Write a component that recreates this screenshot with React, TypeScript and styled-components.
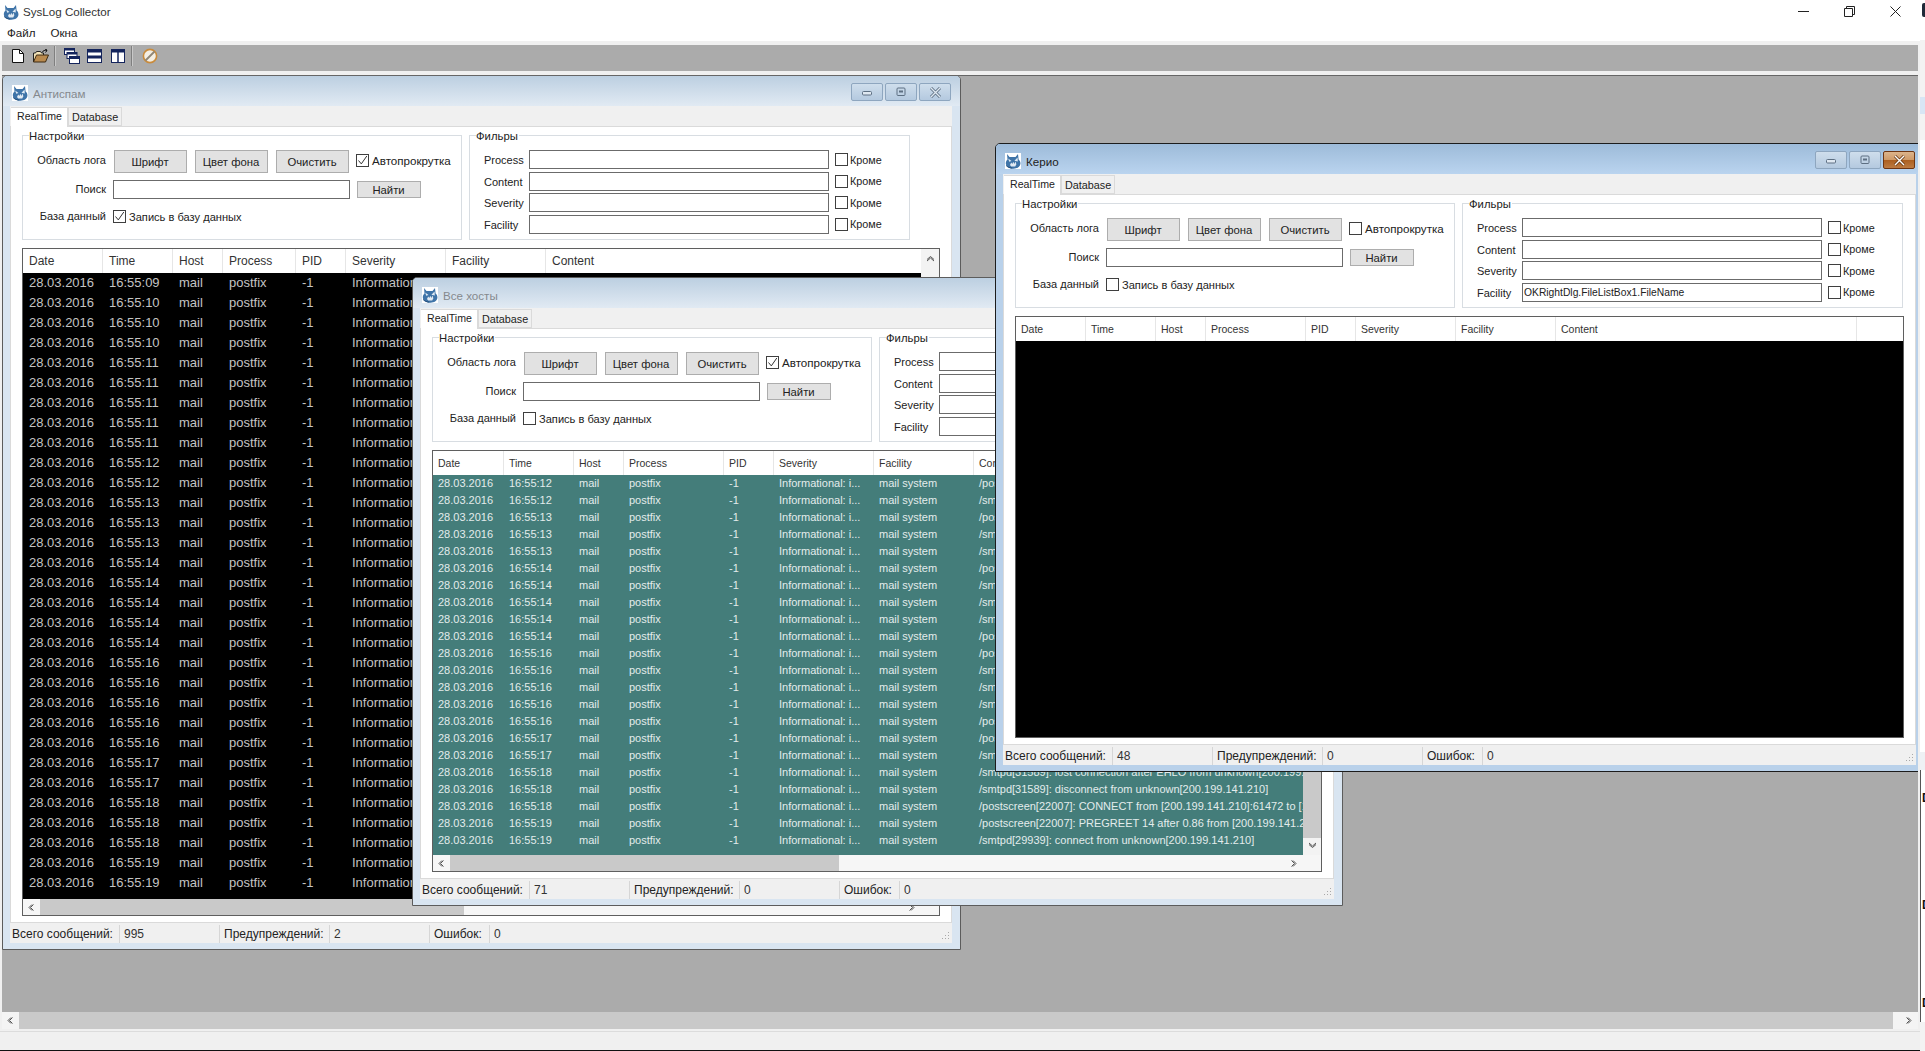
import React from "react";
import styled, { createGlobalStyle } from "styled-components";

const GlobalStyle = createGlobalStyle`
    html, body {
        margin: 0;
        padding: 0;
        background: #fff;
        overflow: hidden;
    }
    * {
        box-sizing: border-box;
    }
    body {
        font-family: "Liberation Sans", Arial, sans-serif;
        font-size: 12px;
        color: #222;
    }
`;

const Screen = styled.div`
    display: flex;
    width: 1925px;
    height: 1051px;
    overflow: hidden;
    background: #fff;
`;

const MainWindow = styled.div`
    display: flex;
    flex-direction: column;
    width: 1920px;
    height: 1051px;
    background: #f0f0f0;
    border-bottom: 1px solid #111;
`;

const AppTitleBar = styled.div`
    display: flex;
    align-items: center;
    height: 22px;
    padding: 1px 2px 0 3px;
    background: #fff;
`;

const AppTitle = styled.span`
    flex: 1;
    margin-left: 4px;
    font-size: 11.6px;
    color: #333;
`;

const CaptionButton = styled.div`
    display: flex;
    align-items: center;
    justify-content: center;
    width: 46px;
    height: 20px;
`;

const MenuBar = styled.div`
    display: flex;
    height: 19px;
    padding: 2px 0 0 7px;
    gap: 15px;
    background: #fff;
    align-items: center;
    font-size: 11.6px;
`;

const ToolbarBand = styled.div`
    height: 34px;
    padding: 4px 2px 3px 2px;
    background: #f0f0f0;
`;

const Toolbar = styled.div`
    display: flex;
    align-items: center;
    width: 1916px;
    height: 26px;
    padding: 0 0 4px 10px;
    background: #ababab;
`;

const ToolIcon = styled.svg<{ $gap?: number }>`
    display: block;
    flex: none;
    margin-right: ${(p) => p.$gap ?? 0}px;
`;

const ToolSep = styled.div<{ $gap: number }>`
    width: 2px;
    height: 20px;
    background: #7f7f7f;
    border-right: 1px solid #c8c8c8;
    margin-right: ${(p) => p.$gap}px;
    flex: none;
`;

const Desktop = styled.div`
    position: relative;
    flex: none;
    width: 1916px;
    height: 937px;
    margin-left: 2px;
    background: #ababab;
    border-top: 1px solid #666;
    overflow: hidden;
`;

const DesktopScroll = styled.div`
    display: flex;
    align-items: center;
    width: 1916px;
    height: 17px;
    margin-left: 2px;
    background: #f4f4f4;
    flex: none;
`;

const BottomStatus = styled.div`
    flex: 1;
    margin-top: 2px;
    border-top: 1px solid #dcdcdc;
    background: #f0f0f0;
`;

const ScrollBtn = styled.div<{ $w: number }>`
    display: flex;
    align-items: center;
    justify-content: center;
    flex: none;
    width: ${(p) => p.$w}px;
    height: 100%;
`;

const HThumb = styled.div<{ $w: number }>`
    flex: none;
    width: ${(p) => p.$w}px;
    height: 100%;
    background: #c9c9c9;
`;

const Spacer = styled.div`
    flex: 1;
`;

/* ---- mdi child ---- */

const Win = styled.div<{ $x: number; $y: number; $w: number; $h: number; $active?: boolean }>`
    position: absolute;
    left: ${(p) => p.$x}px;
    top: ${(p) => p.$y}px;
    width: ${(p) => p.$w}px;
    height: ${(p) => p.$h}px;
    display: flex;
    flex-direction: column;
    background: ${(p) => (p.$active ? "#b9d1ea" : "#d9e5f1")};
    border: 1px solid ${(p) => (p.$active ? "#1c1c1c" : "#5c5c5c")};
    border-radius: 5px 5px 0 0;
    overflow: hidden;
`;

const WinTitle = styled.div<{ $active?: boolean }>`
    display: flex;
    align-items: center;
    flex: none;
    height: 30px;
    padding: 3px 9px 0 9px;
    color: ${(p) => (p.$active ? "#222" : "#85898d")};
    background: linear-gradient(
        180deg,
        ${(p) => (p.$active ? "#9dbbd9" : "#bccfe1")} 0%,
        ${(p) => (p.$active ? "#bad4ef" : "#e1eaf3")} 100%
    );
`;

const WinTitleText = styled.span`
    flex: 1;
    margin: 2px 0 0 5px;
    font-size: 11.6px;
`;

const WinButtons = styled.div`
    display: flex;
    gap: 2px;
    margin-top: -1px;
`;

const WinButton = styled.div<{ $close?: boolean }>`
    display: flex;
    align-items: center;
    justify-content: center;
    width: 32px;
    height: 18px;
    border-radius: 2px;
    border: 1px solid ${(p) => (p.$close ? "#6e3512" : "#8ea6bf")};
    background: ${(p) =>
        p.$close
            ? "linear-gradient(180deg,#dcb48c 0%,#cf9a68 48%,#ac5f20 52%,#bd7b42 100%)"
            : "linear-gradient(180deg,#cfdeec 0%,#b4c9df 100%)"};
`;

const Client = styled.div`
    flex: 1;
    display: flex;
    flex-direction: column;
    min-height: 0;
    margin: 0 8px 6px 7px;
    background: #f0f0f0;
`;

const TabStrip = styled.div`
    display: flex;
    align-items: flex-end;
    flex: none;
    height: 20px;
    padding-left: 1px;
`;

const Tab = styled.div<{ $active?: boolean }>`
    display: flex;
    align-items: ${(p) => (p.$active ? "flex-start" : "center")};
    height: ${(p) => (p.$active ? 20 : 19)}px;
    margin-bottom: ${(p) => (p.$active ? -1 : 0)}px;
    width: ${(p) => (p.$active ? 57 : 54)}px;
    padding: ${(p) => (p.$active ? "2px 0 0 6px" : "1px 0 0 3px")};
    background: ${(p) => (p.$active ? "#fff" : "#f0f0f0")};
    border: 1px solid #dadada;
    border-bottom: ${(p) => (p.$active ? "none" : "1px solid #dadada")};
    border-left: ${(p) => (p.$active ? "none" : "1px solid #dadada")};
    font-size: ${(p) => (p.$active ? 10.6 : 10.8)}px;
    white-space: nowrap;
    position: relative;
    z-index: 1;
`;

const TabPanel = styled.div`
    flex: 1;
    display: flex;
    flex-direction: column;
    min-height: 0;
    padding: 8px 11px 6px 11px;
    background: #fff;
    border: 1px solid #dadada;
`;

const GroupRow = styled.div`
    display: flex;
    flex: none;
    gap: 7px;
`;

const Group = styled.div<{ $w: number }>`
    position: relative;
    flex: none;
    width: ${(p) => p.$w}px;
    height: 105px;
    border: 1px solid #d8dde2;
`;

const Legend = styled.span`
    position: absolute;
    left: 6px;
    top: -7px;
    padding-right: 1px;
    background: #fff;
    font-size: 11.3px;
    line-height: 14px;
`;

const SettingsGrid = styled.div`
    display: grid;
    grid-template-columns: 83px 1fr;
    grid-template-rows: 23px 32px 23px;
    column-gap: 7px;
    align-items: center;
    padding-top: 14px;
`;

const FieldLabel = styled.label<{ $pb: number }>`
    text-align: right;
    font-size: 11px;
    padding-bottom: ${(p) => p.$pb}px;
`;

const FlexRow = styled.div`
    display: flex;
    align-items: center;
`;

const CheckLine = styled.div<{ $mb?: number; $ml?: number }>`
    display: flex;
    align-items: center;
    margin-bottom: ${(p) => p.$mb ?? 0}px;
    margin-left: ${(p) => p.$ml ?? 0}px;
`;

const ActionButton = styled.div<{ $w: number; $h: number; $ml: number }>`
    display: flex;
    align-items: center;
    justify-content: center;
    flex: none;
    width: ${(p) => p.$w}px;
    height: ${(p) => p.$h}px;
    margin-left: ${(p) => p.$ml}px;
    padding: 1px 1px 0 0;
    background: #e2e2e2;
    border: 1px solid #adadad;
    font-size: 11.3px;
`;

const Box = styled.span<{ $mr?: number }>`
    display: flex;
    align-items: center;
    justify-content: center;
    flex: none;
    width: 13px;
    height: 13px;
    margin-right: ${(p) => p.$mr ?? 3}px;
    background: #fff;
    border: 1px solid #3f3f3f;
`;

const BoxText = styled.span<{ $size: number }>`
    font-size: ${(p) => p.$size}px;
    white-space: nowrap;
`;

const TextField = styled.input<{ $w: number }>`
    flex: none;
    width: ${(p) => p.$w}px;
    height: 19px;
    padding: 0 1px;
    border: 1px solid #6b6b6b;
    border-radius: 0;
    outline: none;
    background: #fff;
    color: #222;
    font-family: "Liberation Sans", Arial, sans-serif;
    font-size: 10.3px;
`;

const FilterGrid = styled.div`
    display: grid;
    grid-template-columns: 45px 300px 1fr;
    grid-auto-rows: 21.67px;
    align-items: start;
    padding: 14px 0 0 14px;
`;

const FilterLabel = styled.span`
    font-size: 11px;
    line-height: 20px;
`;

const FilterCheck = styled.div`
    display: flex;
    align-items: center;
    padding: 3px 0 0 6px;
`;

/* ---- log table ---- */

const LogFrame = styled.div<{ $scroll: boolean }>`
    flex: 1;
    min-height: 0;
    margin-top: 8px;
    display: grid;
    grid-template-columns: ${(p) => (p.$scroll ? "minmax(0, 1fr) 18px" : "minmax(0, 1fr)")};
    grid-template-rows: minmax(0, 1fr) ${(p) => (p.$scroll ? "16px" : "")};
    border: 1px solid #5f5f5f;
    background: #fff;
`;

const LogMain = styled.div`
    display: flex;
    flex-direction: column;
    min-width: 0;
    min-height: 0;
`;

const HeaderRow = styled.div<{ $cols: string; $size: number; $pad: number }>`
    display: grid;
    grid-template-columns: ${(p) => p.$cols};
    flex: none;
    height: 24px;
    background: #fff;
    font-size: ${(p) => p.$size}px;
    & > * {
        padding-left: ${(p) => p.$pad}px;
    }
`;

const HeaderCell = styled.div`
    line-height: 25px;
    color: #333;
    border-right: 1px solid #e6e6e6;
    white-space: nowrap;
    overflow: hidden;
    &:last-child {
        border-right: none;
    }
`;

const LogBody = styled.div<{ $bg: string; $color: string; $size: number; $rowH: number }>`
    flex: 1;
    min-height: 0;
    overflow: hidden;
    background: ${(p) => p.$bg};
    color: ${(p) => p.$color};
    font-size: ${(p) => p.$size}px;
    line-height: ${(p) => p.$rowH}px;
`;

const LogRow = styled.div<{ $cols: string; $rowH: number; $pad: number }>`
    display: grid;
    grid-template-columns: ${(p) => p.$cols};
    height: ${(p) => p.$rowH}px;
    & > * {
        padding-left: ${(p) => p.$pad}px;
    }
`;

const LogCell = styled.div`
    white-space: nowrap;
    overflow: hidden;
`;

const VScroll = styled.div`
    display: flex;
    flex-direction: column;
    background: #f3f3f3;
`;

const VThumb = styled.div`
    flex: 1;
    margin-top: 110px;
    background: #c9c9c9;
`;

const VBtn = styled.div<{ $h: number }>`
    display: flex;
    align-items: center;
    justify-content: center;
    flex: none;
    height: ${(p) => p.$h}px;
`;

const HScroll = styled.div`
    display: flex;
    align-items: center;
    background: #f6f6f6;
`;

const Corner = styled.div`
    background: #f6f6f6;
`;

const WinStatus = styled.div`
    display: flex;
    flex: none;
    height: 18px;
    margin-top: 2px;
    background: #f0f0f0;
    font-size: 12px;
    line-height: 18px;
`;

const StatusCell = styled.div<{ $w: number }>`
    flex: none;
    width: ${(p) => p.$w}px;
    padding-left: 4px;
    border-right: 1px solid #d6d6d6;
    white-space: nowrap;
    &:first-child {
        padding-left: 2px;
    }
`;

const StatusValue = styled.div<{ $w: number }>`
    flex: none;
    width: ${(p) => p.$w}px;
    padding-left: 4px;
    color: #333;
    border-right: 1px solid #d6d6d6;
    &:nth-last-child(2) {
        border-right: none;
    }
`;

const Grip = styled.svg`
    display: block;
    margin: 6px 2px 0 auto;
    flex: none;
`;

/* ---- sliver of the other window on the right edge ---- */

const OtherWindow = styled.div`
    display: flex;
    flex-direction: column;
    flex: none;
    width: 5px;
    height: 1051px;
    overflow: hidden;
    background: #fff;
`;

const SliverIcon = styled.div`
    flex: none;
    height: 14px;
    margin: 3px 0 23px 2px;
    background: #1f2a38;
    border-radius: 2px 0 0 2px;
`;

const SliverBand = styled.div<{ $h: number; $bg: string }>`
    flex: none;
    height: ${(p) => p.$h}px;
    background: ${(p) => p.$bg};
`;

const SliverGap = styled.div`
    flex: 1;
`;

const SliverList = styled.div`
    flex: none;
    height: 252px;
    display: flex;
    flex-direction: column;
    border-left: 1px solid #555;
    padding: 0 0 0 1px;
    font-size: 12px;
    line-height: 14px;
    font-weight: 700;
    color: #111;
`;

const SliverLetter = styled.span<{ $mt: number }>`
    margin-top: ${(p) => p.$mt}px;
`;

/* ---- drawings ---- */

const AppIconSvg = styled.svg`
    display: block;
    flex: none;
`;

const AppIcon = ({ plate = false }: { plate?: boolean }) => (
    <AppIconSvg width={16} height={16} viewBox="0 0 16 16">
        {plate && <rect width="16" height="16" fill="#fff" />}
        <path d="M2 1l2.5 3h6L13 1l.6 5.5c1.6 1.4 2 3 1.8 4.6-.5 3-3.2 4.6-6.9 4.6S1.6 14.3.9 11c-.3-1.7.3-3.5 1.6-4.6z" fill="#3f74a8" />
        <path d="M3.2 5.4L6.5 8 4.2 8.8z M12.6 4.6L9.4 7.8l3.4.6z" fill="#dfeaf4" />
        <path d="M5 12l1.2-2.6 1.1 1.6 1-2.2 1 2.3 1.2-2.6.9 2.8-1.2 2.2H6.2z" fill="#fff" opacity=".85" />
        <path d="M1.2 12.6c2 1.8 3.6 2.4 6 2.4" stroke="#1f4a78" fill="none" />
    </AppIconSvg>
);

const Chevron = ({ dir, color = "#555" }: { dir: "l" | "r" | "u" | "d"; color?: string }) => {
    const paths = {
        l: "M5 1.5L2 4.5l3 3M6.5 1.5l-3 3 3 3",
        r: "M3 1.5l3 3-3 3M1.5 1.5l3 3-3 3",
        u: "M1 5.5l3.5-3 3.5 3M1 7l3.5-3L8 7",
        d: "M1 2.5l3.5 3 3.5-3M1 1l3.5 3L8 1",
    };
    return (
        <svg width="9" height="9" viewBox="0 0 9 9">
            <path d={paths[dir]} fill="none" stroke={color} strokeWidth="1" />
        </svg>
    );
};

const Tick = () => (
    <svg width="11" height="11" viewBox="0 0 11 11">
        <path d="M1.5 5.5l2.8 3.4L9.8 1" fill="none" stroke="#333" strokeWidth="1" />
    </svg>
);

const MinGlyph = () => (
    <svg width="12" height="8" viewBox="0 0 12 8">
        <rect x="1.5" y="3.5" width="9" height="3.5" rx="1" fill="#dfe8f1" stroke="#5d6f82" />
    </svg>
);

const MaxGlyph = () => (
    <svg width="12" height="10" viewBox="0 0 12 10">
        <rect x="2" y="1" width="8" height="7.5" rx="1" fill="none" stroke="#5d6f82" />
        <rect x="4" y="3.5" width="4" height="2" fill="#5d6f82" />
    </svg>
);

const CloseGlyph = ({ active }: { active?: boolean }) => (
    <svg width="13" height="11" viewBox="0 0 13 11">
        <path d="M2 1l9 9M11 1l-9 9" stroke={active ? "#6b3a14" : "#5d6f82"} strokeWidth="3" />
        <path d="M2 1l9 9M11 1l-9 9" stroke={active ? "#fff" : "#dfe8f1"} strokeWidth="1.4" />
    </svg>
);

const NAVY = "#14245c";

/* ---- data ---- */

const CONTENT_PO = "/postscreen[22007]: CONNECT from [200.199.141.210]:61472 to [10.0.0.5]:25";
const CONTENT_SM = "/smtpd[31589]: connect from unknown[200.199.141.210]";

const ANTISPAM_TIMES = [
    "09", "10", "10", "10", "11", "11", "11", "11", "11", "12", "12", "13", "13", "13", "14", "14",
    "14", "14", "14", "16", "16", "16", "16", "16", "17", "17", "18", "18", "18", "19", "19",
];

const HOSTS_TIMES = [
    "12", "12", "13", "13", "13", "14", "14", "14", "14", "14", "16", "16", "16", "16", "16", "17",
    "17", "18", "18", "18", "19", "19",
];

const HOSTS_PREFIX = ["po", "sm", "po", "sm", "sm", "po", "sm", "sm", "sm", "po", "po", "sm", "sm", "sm", "po", "po", "sm"];

const HOSTS_TAIL = [
    "/smtpd[31589]: lost connection after EHLO from unknown[200.199.141.210]",
    "/smtpd[31589]: disconnect from unknown[200.199.141.210]",
    "/postscreen[22007]: CONNECT from [200.199.141.210]:61472 to [10.0.0.5]:25",
    "/postscreen[22007]: PREGREET 14 after 0.86 from [200.199.141.210]:61472",
    "/smtpd[29939]: connect from unknown[200.199.141.210]",
];

const hostsContent = [...HOSTS_PREFIX.map((p) => (p === "po" ? CONTENT_PO : CONTENT_SM)), ...HOSTS_TAIL];

const COLUMNS = ["Date", "Time", "Host", "Process", "PID", "Severity", "Facility", "Content"];

type LogRowData = { time: string; content: string };

const antispamRows: LogRowData[] = ANTISPAM_TIMES.map((s, i) => ({
    time: `16:55:${s}`,
    content: i % 2 ? CONTENT_SM : CONTENT_PO,
}));

const hostsRows: LogRowData[] = HOSTS_TIMES.map((s, i) => ({
    time: `16:55:${s}`,
    content: hostsContent[i],
}));

type LogWindowProps = {
    title: string;
    x: number;
    y: number;
    w: number;
    h: number;
    active?: boolean;
    autoScroll: boolean;
    writeDb: boolean;
    facilityFilter?: string;
    cols: string;
    headerSize: number;
    pad: number;
    bodyBg: string;
    bodyColor: string;
    bodySize: number;
    rowH: number;
    rows: LogRowData[];
    thumb?: number;
    total: number;
    warnings: number;
    extraHeader?: boolean;
};

const StatusBar = ({ total, warnings }: { total: number; warnings: number }) => (
    <WinStatus>
        <StatusCell $w={110}>Всего сообщений:</StatusCell>
        <StatusValue $w={100}>{total}</StatusValue>
        <StatusCell $w={110}>Предупреждений:</StatusCell>
        <StatusValue $w={100}>{warnings}</StatusValue>
        <StatusCell $w={60}>Ошибок:</StatusCell>
        <StatusValue $w={100}>0</StatusValue>
        <Grip width="10" height="10" viewBox="0 0 10 10">
            <path d="M8 1h1v1H8zM5 4h1v1H5zM8 4h1v1H8zM2 7h1v1H2zM5 7h1v1H5zM8 7h1v1H8z" fill="#a9a9a9" />
        </Grip>
    </WinStatus>
);

const LogWindow = (p: LogWindowProps) => {
    const hasScroll = p.thumb !== undefined;
    const filters = [
        { name: "Process", value: "" },
        { name: "Content", value: "" },
        { name: "Severity", value: "" },
        { name: "Facility", value: p.facilityFilter ?? "" },
    ];
    return (
        <Win $x={p.x} $y={p.y} $w={p.w} $h={p.h} $active={p.active}>
            <WinTitle $active={p.active}>
                <AppIcon plate />
                <WinTitleText>{p.title}</WinTitleText>
                <WinButtons>
                    <WinButton><MinGlyph /></WinButton>
                    <WinButton><MaxGlyph /></WinButton>
                    <WinButton $close={p.active}><CloseGlyph active={p.active} /></WinButton>
                </WinButtons>
            </WinTitle>
            <Client>
                <TabStrip>
                    <Tab $active>RealTime</Tab>
                    <Tab>Database</Tab>
                </TabStrip>
                <TabPanel>
                    <GroupRow>
                        <Group $w={440}>
                            <Legend>Настройки</Legend>
                            <SettingsGrid>
                                <FieldLabel $pb={3}>Область лога</FieldLabel>
                                <FlexRow>
                                    <ActionButton $w={73} $h={23} $ml={1}>Шрифт</ActionButton>
                                    <ActionButton $w={73} $h={23} $ml={8}>Цвет фона</ActionButton>
                                    <ActionButton $w={73} $h={23} $ml={8}>Очистить</ActionButton>
                                    <CheckLine $mb={3} $ml={7}>
                                        <Box>{p.autoScroll && <Tick />}</Box>
                                        <BoxText $size={11.6}>Автопрокрутка</BoxText>
                                    </CheckLine>
                                </FlexRow>
                                <FieldLabel $pb={1}>Поиск</FieldLabel>
                                <FlexRow>
                                    <TextField $w={237} readOnly defaultValue="" />
                                    <ActionButton $w={64} $h={17} $ml={7}>Найти</ActionButton>
                                </FlexRow>
                                <FieldLabel $pb={1}>База данный</FieldLabel>
                                <CheckLine>
                                    <Box>{p.writeDb && <Tick />}</Box>
                                    <BoxText $size={11.1}>Запись в базу данных</BoxText>
                                </CheckLine>
                            </SettingsGrid>
                        </Group>
                        <Group $w={441}>
                            <Legend>Фильры</Legend>
                            <FilterGrid>
                                {filters.map((f) => (
                                    <React.Fragment key={f.name}>
                                        <FilterLabel>{f.name}</FilterLabel>
                                        <TextField $w={300} readOnly defaultValue={f.value} />
                                        <FilterCheck>
                                            <Box $mr={2} />
                                            <BoxText $size={10.8}>Кроме</BoxText>
                                        </FilterCheck>
                                    </React.Fragment>
                                ))}
                            </FilterGrid>
                        </Group>
                    </GroupRow>
                    <LogFrame $scroll={hasScroll}>
                        <LogMain>
                            <HeaderRow $cols={p.cols} $size={p.headerSize} $pad={p.pad}>
                                {COLUMNS.map((c) => (
                                    <HeaderCell key={c}>{c}</HeaderCell>
                                ))}
                                {p.extraHeader && <HeaderCell />}
                            </HeaderRow>
                            <LogBody $bg={p.bodyBg} $color={p.bodyColor} $size={p.bodySize} $rowH={p.rowH}>
                                {p.rows.map((r, i) => (
                                    <LogRow key={i} $cols={p.cols} $rowH={p.rowH} $pad={p.pad}>
                                        <LogCell>28.03.2016</LogCell>
                                        <LogCell>{r.time}</LogCell>
                                        <LogCell>mail</LogCell>
                                        <LogCell>postfix</LogCell>
                                        <LogCell>-1</LogCell>
                                        <LogCell>Informational: i...</LogCell>
                                        <LogCell>mail system</LogCell>
                                        <LogCell>{r.content}</LogCell>
                                    </LogRow>
                                ))}
                            </LogBody>
                        </LogMain>
                        {hasScroll && (
                            <VScroll>
                                <VBtn $h={18}><Chevron dir="u" /></VBtn>
                                <VThumb />
                                <VBtn $h={17}><Chevron dir="d" /></VBtn>
                            </VScroll>
                        )}
                        {hasScroll && (
                            <HScroll>
                                <ScrollBtn $w={17}><Chevron dir="l" /></ScrollBtn>
                                <HThumb $w={p.thumb as number} />
                                <Spacer />
                                <ScrollBtn $w={17}><Chevron dir="r" /></ScrollBtn>
                            </HScroll>
                        )}
                        {hasScroll && <Corner />}
                    </LogFrame>
                </TabPanel>
                <StatusBar total={p.total} warnings={p.warnings} />
            </Client>
        </Win>
    );
};

export default function App() {
    return (
        <Screen>
            <GlobalStyle />
            <MainWindow>
                <AppTitleBar>
                    <AppIcon />
                    <AppTitle>SysLog Collector</AppTitle>
                    <CaptionButton>
                        <svg width="11" height="11" viewBox="0 0 11 11">
                            <path d="M0 5.5h11" stroke="#222" />
                        </svg>
                    </CaptionButton>
                    <CaptionButton>
                        <svg width="11" height="11" viewBox="0 0 11 11">
                            <path d="M.5 2.5h8v8h-8zM2.5 2.5v-2h8v8h-2" fill="none" stroke="#222" />
                        </svg>
                    </CaptionButton>
                    <CaptionButton>
                        <svg width="11" height="11" viewBox="0 0 11 11">
                            <path d="M.5.5l10 10M10.5.5l-10 10" stroke="#222" />
                        </svg>
                    </CaptionButton>
                </AppTitleBar>
                <MenuBar>
                    <span>Файл</span>
                    <span>Окна</span>
                </MenuBar>
                <ToolbarBand>
                    <Toolbar>
                        <ToolIcon width="12" height="14" viewBox="0 0 12 14" $gap={9}>
                            <path d="M.5.5h7l4 4v9H.5z" fill="#fff" stroke="#111" />
                            <path d="M7.5.5v4h4" fill="none" stroke="#111" />
                        </ToolIcon>
                        <ToolIcon width="16" height="14" viewBox="0 0 16 14" $gap={5}>
                            <path d="M.5 13V4h2l1-1.500h4l1 1.500h2v2" fill="#f3e3b8" stroke="#222" />
                            <path d="M.5 13l3-7h12l-3 7z" fill="#b98a4e" stroke="#3c2a12" />
                            <path d="M9 3.500c1-2 3-2.500 5-2M14 1l-2-1M14 1.500l-1.500 2" fill="none" stroke="#111" />
                        </ToolIcon>
                        <ToolSep $gap={8} />
                        <ToolIcon width="16" height="16" viewBox="0 0 16 16" $gap={7}>
                            <rect x="0.500" y="0.500" width="10" height="6" fill="#fff" stroke={NAVY} />
                            <rect x="0.500" y="0.500" width="10" height="2" fill={NAVY} />
                            <rect x="3" y="4.500" width="10" height="6" fill="#fff" stroke={NAVY} />
                            <rect x="3" y="4.500" width="10" height="2" fill={NAVY} />
                            <rect x="5.500" y="8.500" width="10" height="7" fill="#fff" stroke={NAVY} />
                            <rect x="5.500" y="8.500" width="10" height="2.500" fill={NAVY} />
                        </ToolIcon>
                        <ToolIcon width="15" height="14" viewBox="0 0 15 14" $gap={9}>
                            <rect x="0.500" y="0.500" width="14" height="13" fill="#fff" stroke={NAVY} />
                            <rect x="0.500" y="0.500" width="14" height="3" fill={NAVY} />
                            <rect x="0.500" y="6.500" width="14" height="3" fill={NAVY} />
                        </ToolIcon>
                        <ToolIcon width="14" height="14" viewBox="0 0 14 14" $gap={6}>
                            <rect x="0.500" y="0.500" width="13" height="13" fill="#fff" stroke={NAVY} />
                            <rect x="0.500" y="0.500" width="13" height="3" fill={NAVY} />
                            <path d="M7 3v11" stroke={NAVY} strokeWidth="1.500" />
                        </ToolIcon>
                        <ToolSep $gap={9} />
                        <ToolIcon width="16" height="16" viewBox="0 0 16 16">
                            <circle cx="8" cy="8" r="6.600" fill="#f4efe4" stroke="#c98b3c" strokeWidth="1.600" />
                            <path d="M12.500 3.500l-9 9" stroke="#8f8676" strokeWidth="1.800" />
                        </ToolIcon>
                    </Toolbar>
                </ToolbarBand>
                <Desktop>
                    <LogWindow
                        title="Антиспам"
                        x={0}
                        y={-1}
                        w={959}
                        h={875}
                        autoScroll
                        writeDb
                        cols="80px 70px 50px 73px 50px 100px 100px 1fr"
                        headerSize={12}
                        pad={6}
                        bodyBg="#000"
                        bodyColor="#c4c4c4"
                        bodySize={13}
                        rowH={20}
                        rows={antispamRows}
                        thumb={424}
                        total={995}
                        warnings={2}
                    />
                    <LogWindow
                        title="Все хосты"
                        x={410}
                        y={201}
                        w={931}
                        h={629}
                        autoScroll
                        writeDb={false}
                        cols="71px 70px 50px 100px 50px 100px 100px 1fr"
                        headerSize={10.5}
                        pad={5}
                        bodyBg="#447d7a"
                        bodyColor="#e3ecec"
                        bodySize={11}
                        rowH={17}
                        rows={hostsRows}
                        thumb={389}
                        total={71}
                        warnings={0}
                    />
                    <LogWindow
                        title="Керио"
                        x={993}
                        y={67}
                        w={930}
                        h={629}
                        active
                        autoScroll={false}
                        writeDb={false}
                        facilityFilter="OKRightDlg.FileListBox1.FileName"
                        cols="70px 70px 50px 100px 50px 100px 100px 301px 1fr"
                        headerSize={10.5}
                        pad={5}
                        bodyBg="#000"
                        bodyColor="#c4c4c4"
                        bodySize={11}
                        rowH={17}
                        rows={[]}
                        total={48}
                        warnings={0}
                        extraHeader
                    />
                </Desktop>
                <DesktopScroll>
                    <ScrollBtn $w={17}><Chevron dir="l" /></ScrollBtn>
                    <HThumb $w={1874} />
                    <Spacer />
                    <ScrollBtn $w={17}><Chevron dir="r" /></ScrollBtn>
                </DesktopScroll>
                <BottomStatus />
            </MainWindow>
            <OtherWindow>
                <SliverIcon />
                <SliverBand $h={57} $bg="#f3f3f3" />
                <SliverBand $h={17} $bg="#d8e6f5" />
                <SliverBand $h={26} $bg="#f3f3f3" />
                <SliverGap />
                <SliverBand $h={18} $bg="#eef1f4" />
                <SliverList>
                    <SliverLetter $mt={21}>D</SliverLetter>
                    <SliverLetter $mt={93}>D</SliverLetter>
                    <SliverLetter $mt={84}>D</SliverLetter>
                </SliverList>
                <SliverBand $h={29} $bg="#f3f3f3" />
            </OtherWindow>
        </Screen>
    );
}
